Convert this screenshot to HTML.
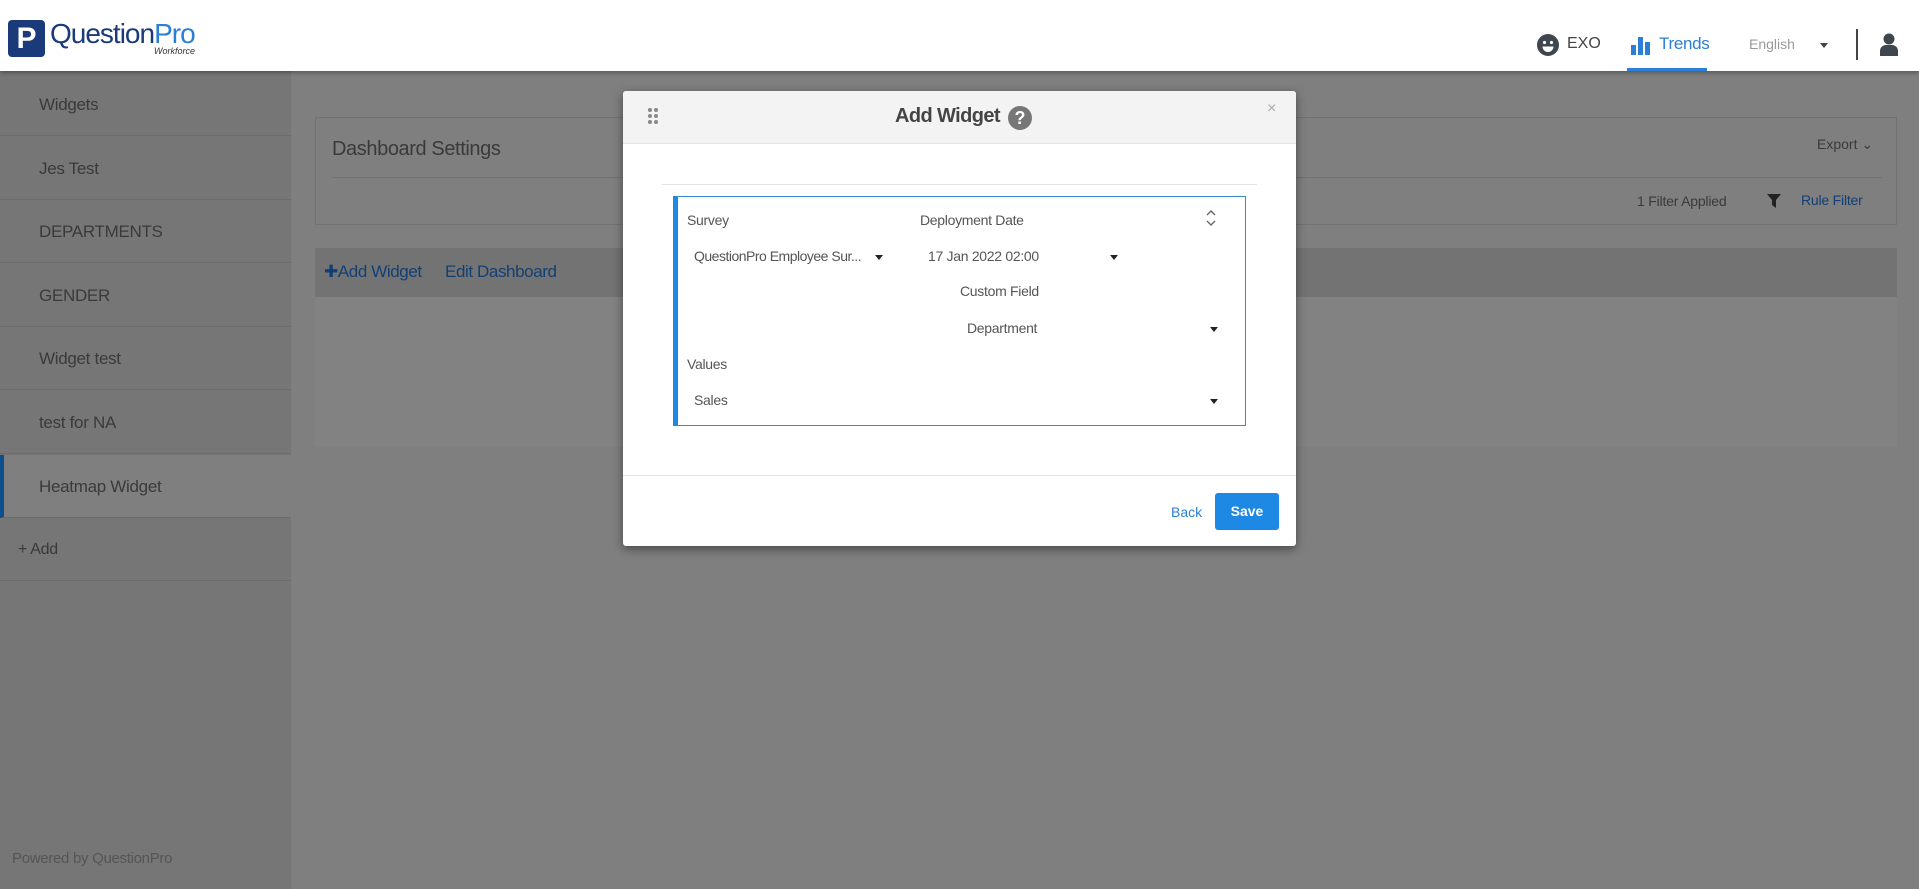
<!DOCTYPE html>
<html><head><meta charset="utf-8"><style>
*{box-sizing:border-box;margin:0;padding:0}
body{width:1919px;height:889px;overflow:hidden;background:#7f7f7f;font-family:"Liberation Sans",sans-serif;position:relative}
.abs{position:absolute}
.hdr{left:0;top:0;width:1919px;height:71px;background:#fff;box-shadow:0 2px 4px rgba(0,0,0,.3);z-index:2}
.side{left:0;top:71px;width:291px;height:818px;background:#767676}
.item{position:absolute;left:0;width:291px;height:63px;border-bottom:1px solid #6c6c6c;color:#3a3a3a;font-size:17px;letter-spacing:-0.3px;padding-left:39px;line-height:63px}
.lbl{position:absolute;font-size:14px;letter-spacing:-0.3px;color:#555;white-space:nowrap}
.caret{position:absolute;width:0;height:0;border-left:4.5px solid transparent;border-right:4.5px solid transparent;border-top:5px solid #222}
</style></head><body>
<div class="abs hdr">
  <div class="abs" style="left:8px;top:20px;width:37px;height:37px;background:#1b3a7a;border-radius:4px;color:#fff;font:bold 30px 'Liberation Sans',sans-serif;text-align:center;line-height:37px">P</div>
  <div class="abs" style="left:50px;top:18px;font-size:28px;letter-spacing:-1px;color:#1b3a7a">Question<span style="color:#2b7fd4">Pro</span></div>
  <div class="abs" style="left:154px;top:46px;font-size:9px;font-style:italic;color:#333">Workforce</div>
  <svg class="abs" style="left:1537px;top:34px" width="22" height="22" viewBox="0 0 22 22"><circle cx="11" cy="11" r="11" fill="#3f4650"/><circle cx="7.5" cy="8.5" r="1.6" fill="#fff"/><circle cx="14.5" cy="8.5" r="1.6" fill="#fff"/><path d="M5.5 12.5h11a5.5 5.5 0 0 1-11 0z" fill="#fff"/></svg>
  <div class="abs" style="left:1567px;top:35px;font-size:16px;color:#444">EXO</div>
  <svg class="abs" style="left:1631px;top:36px" width="19" height="19"><rect x="0" y="9" width="5" height="10" fill="#2b7fd4"/><rect x="7" y="1" width="5" height="18" fill="#2b7fd4"/><rect x="14" y="6" width="5" height="13" fill="#2b7fd4"/></svg>
  <div class="abs" style="left:1659px;top:34px;font-size:17px;letter-spacing:-0.3px;color:#2b7fd4">Trends</div>
  <div class="abs" style="left:1627px;top:68px;width:80px;height:3px;background:#2b7fd4"></div>
  <div class="abs" style="left:1749px;top:36px;font-size:14px;color:#999">English</div>
  <div class="caret" style="left:1820px;top:43px;border-top-color:#444"></div>
  <div class="abs" style="left:1856px;top:29px;width:2px;height:31px;background:#444"></div>
  <svg class="abs" style="left:1880px;top:33px" width="18" height="23" viewBox="0 0 18 23"><circle cx="9" cy="6" r="5.5" fill="#3f4650"/><path d="M0 23v-5a6 6 0 0 1 6-6h6a6 6 0 0 1 6 6v5z" fill="#3f4650"/></svg>
</div>
<div class="abs side">
  <div class="item" style="top:2px">Widgets</div>
  <div class="item" style="top:66px">Jes Test</div>
  <div class="item" style="top:129px">DEPARTMENTS</div>
  <div class="item" style="top:193px">GENDER</div>
  <div class="item" style="top:256px">Widget test</div>
  <div class="item" style="top:320px">test for NA</div>
  <div class="item" style="top:384px;background:#7f7f7f;border-left:4px solid #0d4f8c;padding-left:35px">Heatmap Widget</div>
  <div class="item" style="top:447px;padding-left:18px;font-size:16px">+ Add</div>
  <div class="abs" style="left:12px;top:779px;font-size:15px;letter-spacing:-0.3px;color:#555">Powered by QuestionPro</div>
</div>
<div class="abs" style="left:315px;top:117px;width:1582px;height:108px;border:1px solid #727272">
  <div class="abs" style="left:16px;top:20px;font-size:20px;letter-spacing:-0.4px;color:#3a3a3a">Dashboard Settings</div>
  <div class="abs" style="left:16px;top:59px;width:1550px;height:1px;background:#727272"></div>
  <div class="abs" style="left:1501px;top:18px;font-size:14px;color:#3a3a3a">Export ⌄</div>
  <div class="abs" style="left:1321px;top:75px;font-size:14px;letter-spacing:-0.2px;color:#3a3a3a">1 Filter Applied</div>
  <svg class="abs" style="left:1451px;top:76px" width="14" height="14"><path d="M0 0h14l-5 6v8l-4-3v-5z" fill="#222"/></svg>
  <div class="abs" style="left:1485px;top:74px;font-size:14px;letter-spacing:-0.2px;color:#123f73">Rule Filter</div>
</div>
<div class="abs" style="left:315px;top:248px;width:1582px;height:49px;background:#737373">
  <div class="abs" style="left:9px;top:14px;font-size:17px;letter-spacing:-0.4px;color:#123f73">✚Add Widget</div>
  <div class="abs" style="left:130px;top:14px;font-size:17px;letter-spacing:-0.4px;color:#123f73">Edit Dashboard</div>
</div>
<div class="abs" style="left:315px;top:297px;width:1582px;height:150px;background:#828282"></div>

<div class="abs" style="left:623px;top:91px;width:673px;height:455px;background:#fff;border-radius:3px;box-shadow:0 3px 10px rgba(0,0,0,.45);overflow:hidden">
  <div class="abs" style="left:0;top:0;width:673px;height:53px;background:#f3f3f3;border-bottom:1px solid #e3e3e3"></div>
  <svg class="abs" style="left:24px;top:16px" width="12" height="18"><g fill="#888"><circle cx="3" cy="3" r="2"/><circle cx="9" cy="3" r="2"/><circle cx="3" cy="9" r="2"/><circle cx="9" cy="9" r="2"/><circle cx="3" cy="15" r="2"/><circle cx="9" cy="15" r="2"/></g></svg>
  <div class="abs" style="left:272px;top:14px;font-size:20px;letter-spacing:-0.6px;font-weight:bold;color:#444">Add Widget</div>
  <div class="abs" style="left:385px;top:15px;width:24px;height:24px;border-radius:50%;background:#777;color:#fff;font:bold 18px 'Liberation Sans',sans-serif;text-align:center;line-height:24px">?</div>
  <div class="abs" style="left:644px;top:9px;font-size:16px;color:#aaa">×</div>
  <div class="abs" style="left:39px;top:93px;width:595px;height:1px;background:#e3e3e3"></div>
  <div class="abs" style="left:50px;top:105px;width:573px;height:230px;border:1px solid #3a8ad0;border-left:5px solid #1e88e5"></div>
  <div class="lbl" style="left:64px;top:121px">Survey</div>
  <div class="lbl" style="left:297px;top:121px">Deployment Date</div>
  <svg class="abs" style="left:583px;top:118px" width="10" height="18"><path d="M1 6l4-4 4 4M1 12l4 4 4-4" stroke="#666" stroke-width="1.4" fill="none"/></svg>
  <div class="lbl" style="left:71px;top:157px;letter-spacing:-0.5px">QuestionPro Employee Sur...</div>
  <div class="caret" style="left:252px;top:164px"></div>
  <div class="lbl" style="left:305px;top:157px">17 Jan 2022 02:00</div>
  <div class="caret" style="left:487px;top:164px"></div>
  <div class="lbl" style="left:337px;top:192px">Custom Field</div>
  <div class="lbl" style="left:344px;top:229px">Department</div>
  <div class="caret" style="left:587px;top:236px"></div>
  <div class="lbl" style="left:64px;top:265px">Values</div>
  <div class="lbl" style="left:71px;top:301px">Sales</div>
  <div class="caret" style="left:587px;top:308px"></div>
  <div class="abs" style="left:0;top:384px;width:673px;height:1px;background:#e3e3e3"></div>
  <div class="abs" style="left:548px;top:413px;font-size:14px;color:#2b7fd4">Back</div>
  <div class="abs" style="left:592px;top:402px;width:64px;height:37px;background:#1e88e5;border-radius:3px;color:#fff;font-size:14px;font-weight:bold;text-align:center;line-height:37px">Save</div>
</div>
</body></html>
